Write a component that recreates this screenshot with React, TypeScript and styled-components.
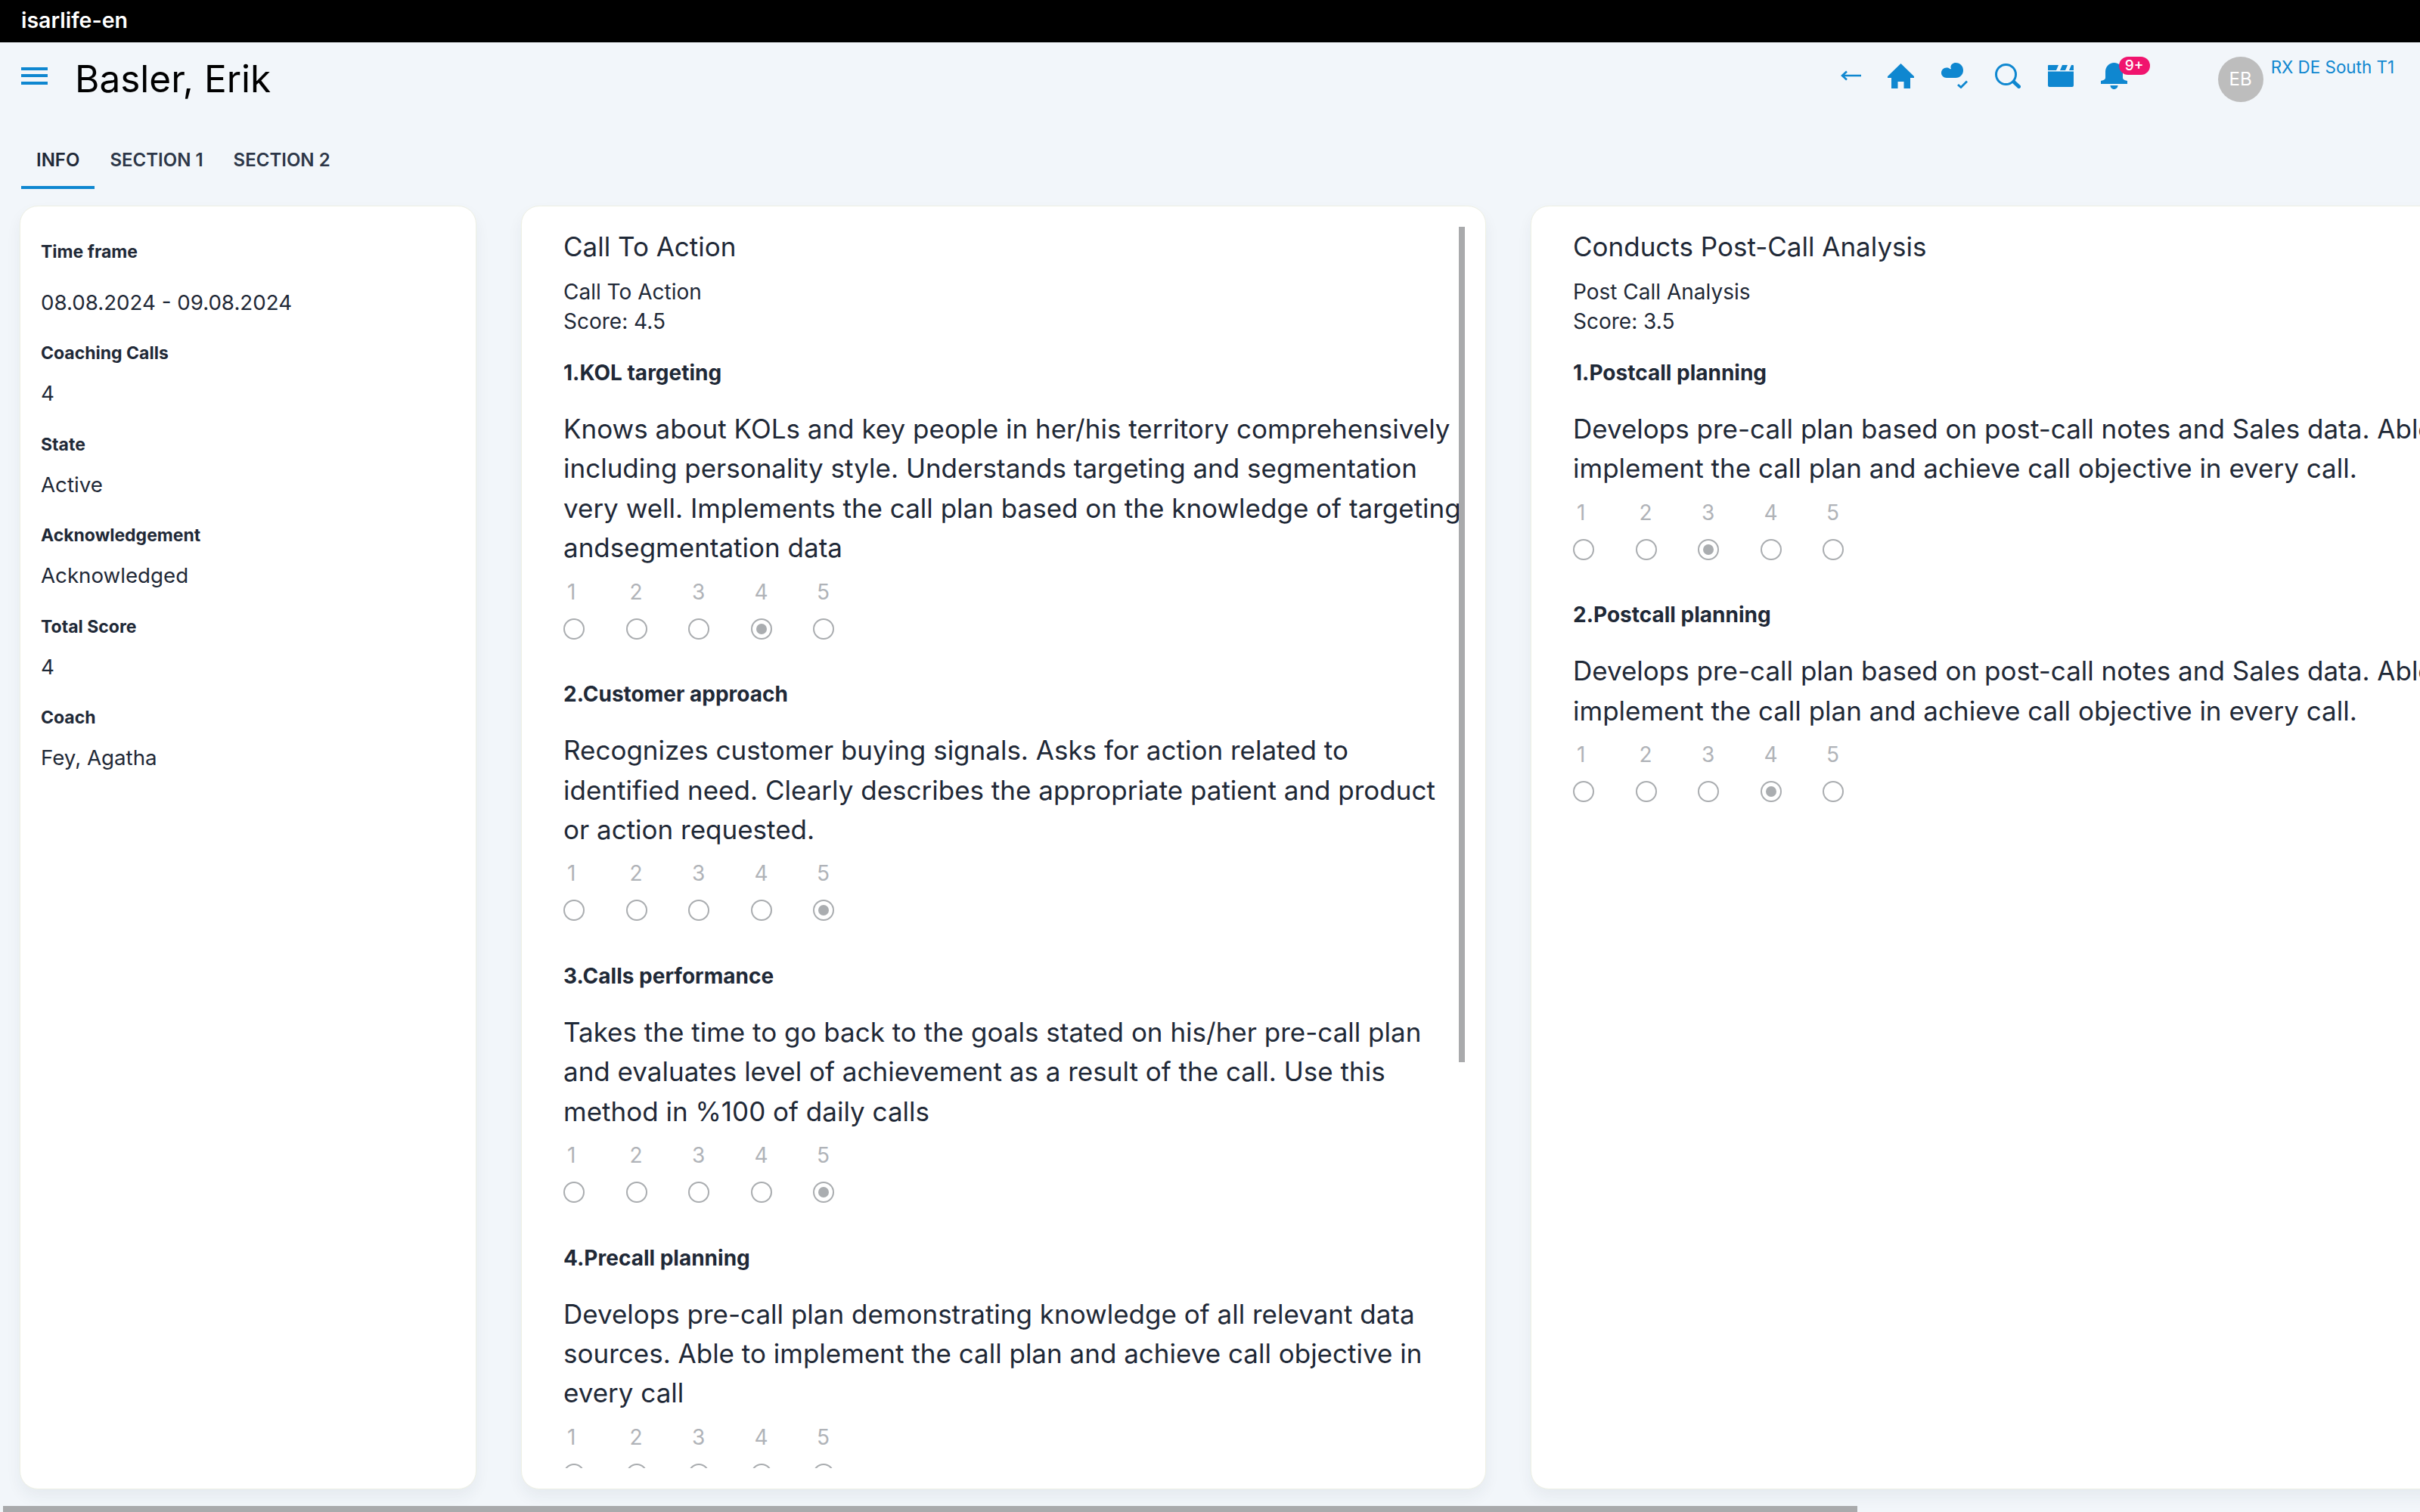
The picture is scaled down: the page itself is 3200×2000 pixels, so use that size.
import styled, { createGlobalStyle } from "styled-components";

const GlobalStyle = createGlobalStyle`
  html, body {
    margin: 0;
    padding: 0;
    height: 100%;
    overflow: hidden;
  }
  body {
    font-family: Inter, "Liberation Sans", sans-serif;
    background-color: #f2f6fa;
    color: #1f2937;
  }
  #root {
    height: 100%;
  }
  * {
    box-sizing: border-box;
  }
`;

const Page = styled.div`
  position: relative;
  height: 100vh;
  display: flex;
  flex-direction: column;
  overflow: hidden;
`;

const TopBar = styled.div`
  height: 56px;
  flex-shrink: 0;
  background-color: #000;
  color: #fff;
  padding-left: 28px;
  font-size: 28.5px;
  font-weight: 600;
  line-height: 54px;
`;

const Header = styled.div`
  height: 92px;
  flex-shrink: 0;
  display: flex;
  align-items: flex-start;
  justify-content: space-between;
`;

const TitleGroup = styled.div`
  display: flex;
  align-items: center;
  padding: 18px 0 0 28px;
`;

const MenuButton = styled.div`
  width: 35px;
  height: 23px;
  display: flex;
  flex-direction: column;
  justify-content: space-between;
  margin-right: 36px;
  margin-top: -8px;
  span {
    height: 4px;
    background-color: #0f87d0;
  }
`;

const Title = styled.div`
  font-size: 49.5px;
  line-height: 60px;
  color: #000;
`;

const Actions = styled.div`
  display: flex;
  align-items: flex-start;
  padding: 19px 34px 0 0;
`;

const IconRow = styled.div`
  height: 40px;
  margin-top: 5px;
  margin-right: 120px;
  display: flex;
  align-items: center;
  gap: 35.8px;
  color: #0f87d0;
`;

const BellSlot = styled.div`
  position: relative;
  display: flex;
`;

const Badge = styled.span`
  position: absolute;
  top: -8px;
  left: 24px;
  width: 41px;
  height: 24px;
  border-radius: 12px;
  background-color: #f0146e;
  color: #fff;
  font-size: 19px;
  font-weight: 500;
  line-height: 24px;
  text-align: center;
`;

const Avatar = styled.div`
  width: 60px;
  height: 60px;
  border-radius: 50%;
  background-color: #bdbdbd;
  color: #fff;
  font-size: 24px;
  line-height: 60px;
  text-align: center;
`;

const Territory = styled.div`
  margin-left: 10px;
  color: #0f87d0;
  font-size: 22.4px;
  line-height: 28px;
  white-space: nowrap;
`;

const Tabs = styled.div`
  height: 102px;
  flex-shrink: 0;
  display: flex;
  padding: 28px 0 0 28px;
`;

const Tab = styled.div<{ $active?: boolean }>`
  height: 74px;
  padding: 0 20px;
  font-size: 24px;
  font-weight: 600;
  line-height: 72px;
  color: ${(p) => (p.$active ? "#1f2937" : "#2d3748")};
  border-bottom: 4px solid ${(p) => (p.$active ? "#0f87d0" : "transparent")};
`;

const Board = styled.div`
  flex: 1;
  min-height: 0;
  display: flex;
  gap: 59px;
  padding: 22px 0 30px 26px;
`;

const Card = styled.div<{ $wide?: boolean }>`
  position: relative;
  flex: 0 0 ${(p) => (p.$wide ? "1276px" : "604px")};
  display: flex;
  flex-direction: column;
  padding: ${(p) => (p.$wide ? "29px 0 27px" : "0")};
  background-color: #fff;
  border: 1px solid #eef0e4;
  border-radius: 24px;
  box-shadow: 0 10px 20px rgba(30, 50, 70, 0.06);
`;

const InfoList = styled.div`
  padding: 45px 27px;
`;

const InfoRow = styled.div`
  margin-bottom: 30.4px;
`;

const InfoLabel = styled.div<{ $roomy?: boolean }>`
  font-size: 23px;
  font-weight: 700;
  line-height: 30px;
  color: #1f2937;
  margin-bottom: ${(p) => (p.$roomy ? "31px" : "17px")};
`;

const InfoValue = styled.div`
  font-size: 27.7px;
  line-height: 43px;
  color: #1f2937;
`;

const ScrollArea = styled.div`
  flex: 1;
  min-height: 0;
  overflow: hidden;
  padding-left: 55px;
`;

const ScrollThumb = styled.div`
  position: absolute;
  top: 27px;
  right: 27px;
  width: 8px;
  height: 1105px;
  background-color: #a9aaac;
`;

const PageScrollThumb = styled.div`
  position: absolute;
  left: 4px;
  bottom: 0;
  width: 2452px;
  height: 8px;
  background-color: #a9aaac;
`;

const SectionTitle = styled.div`
  font-size: 35px;
  line-height: 48px;
`;

const SectionMeta = styled.div`
  margin-top: 17px;
  font-size: 28px;
  line-height: 39px;
`;

const Question = styled.div`
  padding-top: 28px;
  padding-bottom: 24.5px;
`;

const QuestionTitle = styled.div`
  font-size: 28px;
  font-weight: 700;
  line-height: 40px;
`;

const QuestionText = styled.div`
  margin-top: 28px;
  width: 1190px;
  font-size: 35px;
  line-height: 52.4px;
`;

const Scale = styled.div`
  display: flex;
  margin-top: 12px;
`;

const ScaleOption = styled.div`
  width: 82.5px;
  display: flex;
  flex-direction: column;
`;

const ScaleNumber = styled.span`
  padding-left: 5px;
  font-size: 28px;
  line-height: 40px;
  color: #b0b3b8;
`;

const Radio = styled.span<{ $checked?: boolean }>`
  width: 28px;
  height: 28px;
  margin-top: 15px;
  border-radius: 50%;
  border: 2px solid #aaadb0;
  display: flex;
  align-items: center;
  justify-content: center;
  &::after {
    content: "";
    width: 14px;
    height: 14px;
    border-radius: 50%;
    background-color: ${(p) => (p.$checked ? "#aaadb0" : "transparent")};
  }
`;

type QuestionData = { title: string; text: string; score: number };

const callToAction: QuestionData[] = [
  {
    title: "1.KOL targeting",
    text: "Knows about KOLs and key people in her/his territory comprehensively including personality style. Understands targeting and segmentation very well. Implements the call plan based on the knowledge of targeting andsegmentation data",
    score: 4,
  },
  {
    title: "2.Customer approach",
    text: "Recognizes customer buying signals. Asks for action related to identified need. Clearly describes the appropriate patient and product or action requested.",
    score: 5,
  },
  {
    title: "3.Calls performance",
    text: "Takes the time to go back to the goals stated on his/her pre-call plan and evaluates level of achievement as a result of the call. Use this method in %100 of daily calls",
    score: 5,
  },
  {
    title: "4.Precall planning",
    text: "Develops pre-call plan demonstrating knowledge of all relevant data sources. Able to implement the call plan and achieve call objective in every call",
    score: 0,
  },
];

const postCall: QuestionData[] = [
  {
    title: "1.Postcall planning",
    text: "Develops pre-call plan based on post-call notes and Sales data. Able to implement the call plan and achieve call objective in every call.",
    score: 3,
  },
  {
    title: "2.Postcall planning",
    text: "Develops pre-call plan based on post-call notes and Sales data. Able to implement the call plan and achieve call objective in every call.",
    score: 4,
  },
];

const info = [
  ["Time frame", "08.08.2024 - 09.08.2024"],
  ["Coaching Calls", "4"],
  ["State", "Active"],
  ["Acknowledgement", "Acknowledged"],
  ["Total Score", "4"],
  ["Coach", "Fey, Agatha"],
];

const Section = ({ title, meta, score, questions }: { title: string; meta: string; score: string; questions: QuestionData[] }) => (
  <ScrollArea>
    <SectionTitle>{title}</SectionTitle>
    <SectionMeta>
      {meta}
      <br />
      Score: {score}
    </SectionMeta>
    {questions.map((q) => (
      <Question key={q.title}>
        <QuestionTitle>{q.title}</QuestionTitle>
        <QuestionText>{q.text}</QuestionText>
        <Scale>
          {[1, 2, 3, 4, 5].map((n) => (
            <ScaleOption key={n}>
              <ScaleNumber>{n}</ScaleNumber>
              <Radio $checked={q.score === n} />
            </ScaleOption>
          ))}
        </Scale>
      </Question>
    ))}
  </ScrollArea>
);

export default function App() {
  return (
    <Page>
      <GlobalStyle />
      <TopBar>isarlife-en</TopBar>
      <Header>
        <TitleGroup>
          <MenuButton>
            <span />
            <span />
            <span />
          </MenuButton>
          <Title>Basler, Erik</Title>
        </TitleGroup>
        <Actions>
          <IconRow>
            <svg width="27" height="14" viewBox="0 0 27 14" fill="none" stroke="currentColor" strokeWidth="2.6">
              <path d="M27 7H2M8 1.5 2 7l6 5.5" />
            </svg>
            <svg width="35" height="33" viewBox="0 0 35 33" fill="currentColor">
              <path d="M17.5 0 35 17v2h-5v14h-8.5v-9h-8v9H5V19H0v-2z" />
            </svg>
            <svg width="35" height="34" viewBox="0 0 35 34" fill="currentColor">
              <path d="M7 20C3 20 0 17 0 13.500 0 9.500 3 6.500 7 6.500c1.500 0 3 .5 4 1.200 1 .6 1.800 1 2 .3.2-.6-.6-1-.6-2C12.400 2.500 15.500 0 19 0c6 0 10 4.500 10 10s-4 10-10 10z" />
              <path d="m22 29 4 3.500 8-8" fill="none" stroke="currentColor" strokeWidth="2.8" />
            </svg>
            <svg width="34" height="33" viewBox="0 0 34 33" fill="none" stroke="currentColor" strokeWidth="3">
              <circle cx="14.500" cy="14.500" r="13" />
              <path d="m25 24.500 6.500 6" strokeWidth="5" strokeLinecap="round" />
            </svg>
            <svg width="34" height="29" viewBox="0 0 34 29" fill="currentColor">
              <path d="M1 0h13l-3 7H0V1a1 1 0 0 1 1-1zM19 0h7l-3 7h-7zM31 0h2a1 1 0 0 1 1 1v6h-6zM0 8.500h34V27a2 2 0 0 1-2 2H2a2 2 0 0 1-2-2z" />
            </svg>
            <BellSlot>
              <svg width="35" height="35" viewBox="0 0 35 35" fill="currentColor">
                <path d="M17.500 0C11 0 6 5 6 12v8c0 1.500-1.500 3-6 4v4h35v-4c-4.500-1-6-2.500-6-4v-8C29 5 24 0 17.500 0zM12.500 30h10c0 2.500-2 5-5 5s-5-2.500-5-5z" />
              </svg>
              <Badge>9+</Badge>
            </BellSlot>
          </IconRow>
          <Avatar>EB</Avatar>
          <Territory>RX DE South T1</Territory>
        </Actions>
      </Header>
      <Tabs>
        <Tab $active>INFO</Tab>
        <Tab>SECTION 1</Tab>
        <Tab>SECTION 2</Tab>
      </Tabs>
      <Board>
        <Card>
          <InfoList>
            {info.map(([label, value], i) => (
              <InfoRow key={label}>
                <InfoLabel $roomy={i === 0}>{label}</InfoLabel>
                <InfoValue>{value}</InfoValue>
              </InfoRow>
            ))}
          </InfoList>
        </Card>
        <Card $wide>
          <Section title="Call To Action" meta="Call To Action" score="4.5" questions={callToAction} />
          <ScrollThumb />
        </Card>
        <Card $wide>
          <Section title="Conducts Post-Call Analysis" meta="Post Call Analysis" score="3.5" questions={postCall} />
        </Card>
      </Board>
      <PageScrollThumb />
    </Page>
  );
}
